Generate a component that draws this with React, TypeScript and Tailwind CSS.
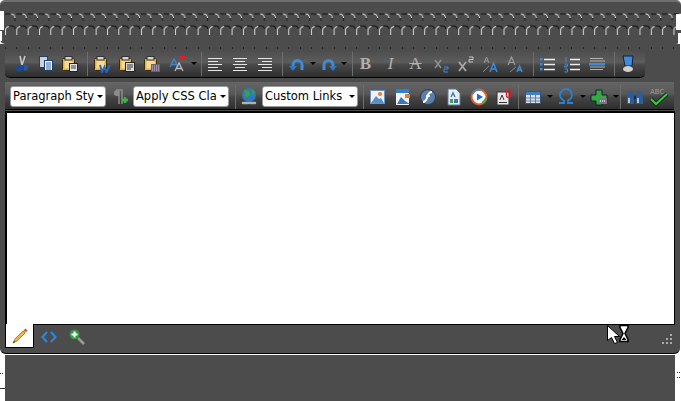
import type { ReactNode } from 'react';

const Ico = ({ children }: { children: ReactNode }) => (
  <svg width="18" height="18" viewBox="0 0 18 18" className="block">{children}</svg>
);

const Clip = () => (
  <g>
    <rect x="1.500" y="3.500" width="12" height="12" rx="1" fill="#e6b13f" stroke="#3a2f14" />
    <rect x="3.500" y="5.500" width="8" height="8" fill="#f5dc96" />
    <rect x="4" y="1.500" width="7" height="3.500" fill="#d4d4d4" stroke="#333" />
  </g>
);

const icons: Record<string, ReactNode> = {
  cut: (
    <Ico>
      <path d="M7 1l2 9M12 1l-3 9" stroke="#c8c8c8" strokeWidth="1.500" />
      <circle cx="6" cy="13.500" r="3" fill="#1d4a90" />
      <circle cx="12" cy="12.500" r="3" fill="#27599f" />
      <rect x="7" y="10" width="4" height="5" fill="#1d4a90" />
    </Ico>
  ),
  copy: (
    <Ico>
      <rect x="2.500" y="1.500" width="8" height="11" fill="#c6d3e3" stroke="#233f66" />
      <rect x="7.500" y="5.500" width="8" height="10" fill="#eef3f8" stroke="#233f66" />
      <path d="M9 8h5M9 10h5M9 12h5M9 14h5" stroke="#3d6aa5" />
    </Ico>
  ),
  paste: (
    <Ico>
      <Clip />
      <rect x="8.500" y="8.500" width="8" height="8" fill="#dfe5ea" stroke="#222" />
      <path d="M10 11h5M10 13h5" stroke="#444" />
    </Ico>
  ),
  word: (
    <Ico>
      <Clip />
      <path d="M7 10l2 7 2.500-5 2 5 3.500-7" fill="none" stroke="#2468c8" strokeWidth="2" />
    </Ico>
  ),
  text: (
    <Ico>
      <Clip />
      <rect x="7.500" y="7.500" width="9" height="9" fill="#ddd" stroke="#222" />
      <path d="M9 10h6M9 12h6M9 14h4" stroke="#333" />
    </Ico>
  ),
  html: (
    <Ico>
      <Clip />
      <rect x="8" y="9" width="9" height="8" fill="#666" />
      <path d="M9 11h7M9 13h7M9 15h7" stroke="#d9b3e6" strokeDasharray="1 1" />
    </Ico>
  ),
  strip: (
    <Ico>
      <path d="M1 12l4-8 4 8M2.500 9.500h5" fill="none" stroke="#3f86d6" strokeWidth="1.300" />
      <path d="M6 16l4-8 4 8M7.500 13.500h5" fill="none" stroke="#bdbdbd" strokeWidth="1.300" />
      <rect x="11" y="1" width="6" height="3" fill="#d8222c" />
    </Ico>
  ),
  left: (
    <Ico>
      <path d="M2 3.500h14M2 6.500h10M2 9.500h14M2 12.500h10M2 15.500h14" stroke="#e6e6e6" />
    </Ico>
  ),
  center: (
    <Ico>
      <path d="M2 3.500h14M4 6.500h10M2 9.500h14M4 12.500h10M2 15.500h14" stroke="#e6e6e6" />
    </Ico>
  ),
  right: (
    <Ico>
      <path d="M2 3.500h14M6 6.500h10M2 9.500h14M6 12.500h10M2 15.500h14" stroke="#e6e6e6" />
    </Ico>
  ),
  undo: (
    <Ico>
      <path d="M5 13V10a4.500 4.500 0 0 1 9 0v5" fill="none" stroke="#3e8bd8" strokeWidth="3" />
      <path d="M1 11h8l-4 5z" fill="#2f78c4" />
    </Ico>
  ),
  redo: (
    <Ico>
      <path d="M13 13V10a4.500 4.500 0 0 0-9 0v5" fill="none" stroke="#3e8bd8" strokeWidth="3" />
      <path d="M9 11h8l-4 5z" fill="#2f78c4" />
    </Ico>
  ),
  sub: (
    <Ico>
      <path d="M3 5l6 8M9 5l-6 8" stroke="#8f8f8f" strokeWidth="1.500" />
      <path d="M12 12h4v2h-4v3h4" fill="none" stroke="#3e8bd8" />
    </Ico>
  ),
  sup: (
    <Ico>
      <path d="M2 7l7 9M9 7l-7 9" stroke="#a8a8a8" strokeWidth="1.800" />
      <path d="M12 2h4v2.500h-4V7h4" fill="none" stroke="#c8c8c8" />
    </Ico>
  ),
  grow: (
    <Ico>
      <path d="M2 8l2.500-6L7 8M3 6h3" fill="none" stroke="#9a9a9a" />
      <path d="M8 17l3.500-9L15 17M9.500 14h4" fill="none" stroke="#3e8bd8" strokeWidth="1.500" />
      <path d="M1 17l6-6" stroke="#888" />
    </Ico>
  ),
  shrink: (
    <Ico>
      <path d="M1 10l3.500-8L8 10M2.500 7.500h4" fill="none" stroke="#9a9a9a" strokeWidth="1.200" />
      <path d="M10 17l2.500-6 2.500 6M11 15h3" fill="none" stroke="#3e8bd8" strokeWidth="1.500" />
      <path d="M3 17l6-5" stroke="#888" />
    </Ico>
  ),
  ul: (
    <Ico>
      <path d="M6 4.500h11M6 9.500h11M6 14.500h11" stroke="#eee" strokeWidth="1.300" />
      <path d="M2 3h2.500v2.500H2zM2 8h2.500v2.500H2zM2 13h2.500v2.500H2z" fill="#3e8bd8" />
    </Ico>
  ),
  ol: (
    <Ico>
      <path d="M7 4.500h10M7 9.500h10M7 14.500h10" stroke="#eee" strokeWidth="1.300" />
      <path d="M3 2v5M1.500 9h3v2h-3v1h3M1.500 14h3v3h-3" fill="none" stroke="#3e8bd8" />
    </Ico>
  ),
  indent: (
    <Ico>
      <path d="M2 3.500h13M2 6h15M2 12h15M2 14.500h13" stroke="#b0b0b0" />
      <rect x="1" y="8" width="16" height="2.500" fill="#3e8bd8" />
    </Ico>
  ),
  paint: (
    <Ico>
      <path d="M4 1h10l-1 10H6z" fill="#3e8bd8" stroke="#123" />
      <ellipse cx="9" cy="14" rx="5" ry="3" fill="#d0d0d0" />
    </Ico>
  ),
  para: (
    <Ico>
      <path d="M5 2h6v14M8 2v14" fill="none" stroke="#8c8c8c" strokeWidth="1.500" />
      <path d="M8 2H6a3 3 0 0 0 0 6h2z" fill="#8c8c8c" />
      <path d="M11 12h6M14 9v6" stroke="#39b54a" strokeWidth="2.500" />
    </Ico>
  ),
  globe: (
    <Ico>
      <circle cx="9" cy="7" r="7" fill="#2f78b8" />
      <path d="M4 2l5 1 1 4-4 3zM11 1l4 3-2 3z" fill="#3ea03e" />
      <path d="M3 15h5M10 15h5" stroke="#b0b0b0" strokeWidth="2.500" strokeLinecap="round" />
    </Ico>
  ),
  image: (
    <Ico>
      <rect x="2.500" y="2.500" width="14" height="13" fill="#f2f2f2" stroke="#6f93bd" />
      <circle cx="12" cy="6" r="2" fill="#ec7b2d" />
      <path d="M3 15l5-7 3 3 2-1 3 5z" fill="#5a8fc6" />
    </Ico>
  ),
  gallery: (
    <Ico>
      <rect x="2" y="1" width="13" height="16" fill="#f2f2f2" />
      <rect x="2" y="1" width="13" height="4" fill="#2f7fd0" />
      <rect x="11" y="6" width="5" height="4" fill="#ec7b2d" />
      <path d="M3 16l4-7 4 4 5 3z" fill="#3f77b5" />
    </Ico>
  ),
  flash: (
    <Ico>
      <circle cx="9" cy="9" r="7.500" fill="#5c7faa" stroke="#2b3d55" />
      <path d="M13 4c-4 0-4 3-5 6S6 14 4 14" fill="none" stroke="#fff" strokeWidth="2" />
      <path d="M7 8h4" stroke="#fff" strokeWidth="1.500" />
    </Ico>
  ),
  doc: (
    <Ico>
      <path d="M3 1h8l4 4v12H3z" fill="#e9eef5" stroke="#5a7799" />
      <path d="M6 9l2-4 2 4" fill="none" stroke="#2f7fd0" strokeWidth="1.500" />
      <rect x="5" y="11" width="3" height="4" fill="#4a9a5a" />
      <rect x="9" y="11" width="4" height="4" fill="#3f77b5" />
    </Ico>
  ),
  media: (
    <Ico>
      <circle cx="9" cy="9" r="7.500" fill="#fff" stroke="#e0552a" strokeWidth="2" />
      <path d="M2.500 6a7 7 0 0 1 8-4" fill="none" stroke="#2f8fd8" strokeWidth="2" />
      <path d="M12 15a7 7 0 0 0 4-5" fill="none" stroke="#4aa84a" strokeWidth="2" />
      <path d="M7 5.500v7l6-3.500z" fill="#2468c8" />
    </Ico>
  ),
  attach: (
    <Ico>
      <rect x="2" y="4" width="12" height="13" fill="#e8e8e8" stroke="#333" />
      <path d="M5 12l2-5 2 5M4 14.500h8" fill="none" stroke="#333" />
      <rect x="11.500" y="1.500" width="4" height="8" rx="2" fill="none" stroke="#d8222c" strokeWidth="1.300" />
    </Ico>
  ),
  table: (
    <Ico>
      <rect x="1.500" y="3.500" width="15" height="12" fill="#d8e2ee" stroke="#30577f" />
      <rect x="2" y="4" width="14" height="3" fill="#3e7fc8" />
      <path d="M2 10h14M2 13h14M6.500 7v8M11.500 7v8" stroke="#6a7f96" />
    </Ico>
  ),
  omega: (
    <Ico>
      <path d="M2 15h5v-2.500C4 11 3 9 3 7a6 6 0 0 1 12 0c0 2-1 4-4 5.500V15h5" fill="none" stroke="#2d7fd0" strokeWidth="1.800" />
    </Ico>
  ),
  plus: (
    <Ico>
      <path d="M6 2h6v5h5v6h-5v4H6v-4H1V7h5z" fill="#2fae3e" stroke="#123" />
      <rect x="9" y="10" width="8" height="6" fill="#777" />
      <path d="M10 13h6" stroke="#d9b3e6" strokeDasharray="1 1" strokeWidth="2" />
    </Ico>
  ),
  find: (
    <Ico>
      <path d="M3 3h4v5h1v8H1V9zM11 3h4l2 6v7h-7V8h1z" fill="#2a5d9a" />
      <path d="M3 10v5M12 10v5" stroke="#dfe7ef" strokeWidth="1.500" />
      <rect x="8" y="8" width="2" height="3" fill="#1c2c40" />
    </Ico>
  ),
  spell: (
    <svg width="20" height="22" viewBox="0 0 20 22" className="block">
      <path d="M2 13l5 5 11-10" fill="none" stroke="#0d2a0d" strokeWidth="4" />
      <path d="M2 13l5 5 11-10" fill="none" stroke="#3fc24a" strokeWidth="2.200" />
      <text x="1" y="8" fontSize="7" fill="#9a9a9a" fontFamily="DejaVu Sans">ABC</text>
    </svg>
  ),
  pencil: (
    <svg width="16" height="16" viewBox="0 0 16 16" className="block">
      <path d="M1 15l2-4 8-8 2 2-8 8z" fill="#f0b93a" stroke="#7a5a10" strokeWidth="0.700" />
      <path d="M11.500 2.500l2-2 2 2-2 2z" fill="#d8503a" />
      <path d="M1 15l1-2 1 1z" fill="#222" />
    </svg>
  ),
  code: (
    <svg width="16" height="14" viewBox="0 0 16 14" className="block">
      <path d="M6 2L1.500 7 6 12M10 2l4.500 5L10 12" fill="none" stroke="#2a86e8" strokeWidth="2" />
    </svg>
  ),
  zoom: (
    <svg width="16" height="16" viewBox="0 0 16 16" className="block">
      <path d="M9 9l6 6" stroke="#9a9a9a" strokeWidth="2.500" />
      <circle cx="5.500" cy="5.500" r="5" fill="#2f9a3e" />
      <path d="M5.500 2.500v6M2.500 5.500h6" stroke="#fff" strokeWidth="2" />
    </svg>
  ),
};

const Btn = ({ name, w = 'w-[25px]' }: { name: string; w?: string }) => (
  <div className={`${w} h-[24px] flex items-center justify-center shrink-0`}>{icons[name]}</div>
);

const Letter = ({ children, cls }: { children: ReactNode; cls: string }) => (
  <div className={`w-[25px] h-[24px] flex items-center justify-center shrink-0 font-['Liberation_Serif',serif] text-[17px] text-[#b0b0b0] ${cls}`}>
    {children}
  </div>
);

const Sep = ({ cls }: { cls: string }) => <div className={`w-[1px] h-[24px] bg-[#6e6e6e] shrink-0 ${cls}`} />;

const Arrow = ({ w }: { w: string }) => (
  <div className={`${w} flex justify-center shrink-0`}>
    <div className="w-0 h-0 border-x-[3px] border-x-transparent border-t-[3px] border-t-black" />
  </div>
);

const Select = ({ label }: { label: string }) => (
  <div className="w-[96px] h-[21px] bg-white rounded-[3px] border border-[#9a9a9a] flex items-center pl-[2px] pr-[2px] shrink-0">
    <span className="flex-1 whitespace-nowrap text-[11.5px] text-black font-['DejaVu_Sans',sans-serif] leading-none">{label}</span>
    <div className="w-0 h-0 border-x-[3px] border-x-transparent border-t-[3px] border-t-black shrink-0" />
  </div>
);

// two rows of overlapping arcs in the page header, with white notches at the sides
const Scallops = () => (
  <svg width="681" height="34" className="block">
    <defs>
      <pattern id="rowA" x="5" y="3" width="11.33" height="12" patternUnits="userSpaceOnUse">
        <path d="M0 1H6" stroke="#111" fill="none" />
        <path d="M6 1A4 4 0 0 1 10 5" stroke="#d8d8d8" fill="none" />
        <path d="M10 5V8" stroke="#222" fill="none" />
      </pattern>
      <pattern id="rowB" x="5" y="15" width="11.33" height="12" patternUnits="userSpaceOnUse">
        <path d="M.5 10V6A4 4 0 0 1 4 1.500" stroke="#d8d8d8" fill="none" />
        <path d="M4 1H7A3 3 0 0 1 10 4" stroke="#111" fill="none" />
      </pattern>
    </defs>
    <rect y="3" width="681" height="12" fill="url(#rowA)" />
    <rect y="15" width="681" height="12" fill="url(#rowB)" />
    <path d="M0 1h4v19H0zM0 21h2v10H0zM676 4h5v16h-5zM678 23h3v11h-3z" fill="#fff" />
  </svg>
);

export default function App() {
  return (
    <div className="w-[681px] h-[401px] overflow-hidden bg-white flex flex-col relative">
      {/* page header */}
      <div className="h-[44px] shrink-0 bg-[#4c4c4c] border-t-2 border-[#6e6e6e] rounded-t-[5px] rounded-b-[5px] pt-[8px]">
        <Scallops />
      </div>

      {/* editor frame */}
      <div className="w-[680px] h-[310px] shrink-0 bg-[#4c4c4c] border-b border-black rounded-b-[6px] pt-[3px]">
        <div className="h-[2px] ml-[5px] w-[670px] bg-[repeating-linear-gradient(90deg,#222_0,#222_1px,transparent_1px,transparent_11.33px)]" />

        {/* toolbar 1 */}
        <div className="mt-[1px] ml-[5px] w-[640px] h-[28px] rounded-[5px] border-b border-black bg-[linear-gradient(180deg,#4c4c4c_0%,#5c5c5c_45%,#484848_55%,#2e2e2e_100%)] flex items-center pl-[5px]">
          <Btn name="cut" w="w-[24px]" />
          <Btn name="copy" w="w-[24px]" />
          <Btn name="paste" w="w-[24px]" />
          <Sep cls="ml-[5px] mr-[1px]" />
          <Btn name="word" />
          <Btn name="text" />
          <Btn name="html" w="w-[26px]" />
          <Btn name="strip" />
          <Arrow w="w-[7px]" />
          <Sep cls="ml-[4px]" />
          <Btn name="left" />
          <Btn name="center" />
          <Btn name="right" />
          <Sep cls="ml-[5px] mr-[1px]" />
          <Btn name="undo" />
          <Arrow w="w-[7px]" />
          <Btn name="redo" />
          <Arrow w="w-[6px]" />
          <Sep cls="ml-[5px]" />
          <Letter cls="font-bold">B</Letter>
          <Letter cls="italic">I</Letter>
          <Letter cls="line-through">A</Letter>
          <Btn name="sub" />
          <Btn name="sup" />
          <Btn name="grow" />
          <Btn name="shrink" />
          <Sep cls="ml-[5px]" />
          <Btn name="ul" />
          <Btn name="ol" />
          <Btn name="indent" />
          <Sep cls="ml-[5px]" />
          <Btn name="paint" />
        </div>

        {/* toolbar 2 */}
        <div className="ml-[5px] mt-[4px] w-[669px] h-[28px] border-b border-black pt-[2px] bg-[linear-gradient(180deg,#666666_0%,#575757_45%,#464646_55%,#2e2e2e_100%)] flex items-center pl-[5px]">
          <Select label="Paragraph Sty" />
          <Btn name="para" w="w-[27px]" />
          <Select label="Apply CSS Cla" />
          <Sep cls="ml-[6px]" />
          <Btn name="globe" w="w-[26px]" />
          <Select label="Custom Links" />
          <Sep cls="ml-[5px]" />
          <Btn name="image" w="w-[26px]" />
          <Btn name="gallery" />
          <Btn name="flash" w="w-[26px]" />
          <Btn name="doc" />
          <Btn name="media" />
          <Btn name="attach" />
          <Sep cls="ml-[2px]" />
          <Btn name="table" w="w-[28px]" />
          <Arrow w="w-[5px]" />
          <Btn name="omega" w="w-[28px]" />
          <Arrow w="w-[5px]" />
          <Btn name="plus" w="w-[28px]" />
          <Arrow w="w-[5px]" />
          <Sep cls="ml-[2px]" />
          <Btn name="find" w="w-[28px]" />
          <Btn name="spell" w="w-[20px]" />
        </div>

        {/* editing area */}
        <div className="ml-[5px] mt-[1px] w-[670px] h-[213px] bg-white border-x border-black border-l-2 border-t-2" />

        {/* bottom tabs */}
        <div className="ml-[5px] w-[670px] h-[29px] flex relative">
          <div className="w-[29px] h-[24px] bg-white flex items-center justify-center border-b border-x border-black">{icons.pencil}</div>
          <div className="flex-1 flex border-t border-black">
            <div className="w-[29px] h-[23px] flex items-center justify-center">{icons.code}</div>
            <div className="w-[28px] h-[23px] flex items-center justify-center">{icons.zoom}</div>
          </div>
          <div className="absolute right-[3px] bottom-[9px] grid grid-cols-3 gap-[2px]">
            <i /><i /><i className="w-[2px] h-[2px] bg-[#aaa]" />
            <i /><i className="w-[2px] h-[2px] bg-[#aaa]" /><i className="w-[2px] h-[2px] bg-[#aaa]" />
            <i className="w-[2px] h-[2px] bg-[#aaa]" /><i className="w-[2px] h-[2px] bg-[#aaa]" /><i className="w-[2px] h-[2px] bg-[#aaa]" />
          </div>
        </div>
      </div>

      {/* panel below the frame */}
      <div className="flex-1 mt-[1px] flex">
        <div className="w-[5px] pt-[18px]">
          <div className="h-[1px] w-[4px] bg-[repeating-linear-gradient(90deg,#333_0,#333_1px,transparent_1px,transparent_2px)]" />
          <div className="h-[1px] w-[5px] mt-[14px] bg-[#333]" />
        </div>
        <div className="w-[670px] bg-[#4c4c4c]" />
        <div className="w-[6px] pt-[17px] pl-[2px]">
          <div className="h-[1px] w-[4px] bg-[repeating-linear-gradient(90deg,#333_0,#333_1px,transparent_1px,transparent_2px)]" />
          <div className="h-[1px] w-[4px] mt-[4px] bg-[repeating-linear-gradient(90deg,#333_0,#333_1px,transparent_1px,transparent_2px)]" />
        </div>
      </div>

      {/* wait cursor on top of everything */}
      <svg width="24" height="22" viewBox="0 0 24 22" className="absolute left-[606px] top-[324px]">
        <path d="M1.500 1.500v15l4-3 3 6 3-1-3-6h5z" fill="#fff" stroke="#000" />
        <path d="M14 1.500h8v2l-3 6 3 6v2h-8v-2l3-6-3-6z" fill="#fff" stroke="#000" strokeWidth="1.500" />
        <path d="M15.500 16h5l-2.500-3z" fill="#000" />
      </svg>
    </div>
  );
}
